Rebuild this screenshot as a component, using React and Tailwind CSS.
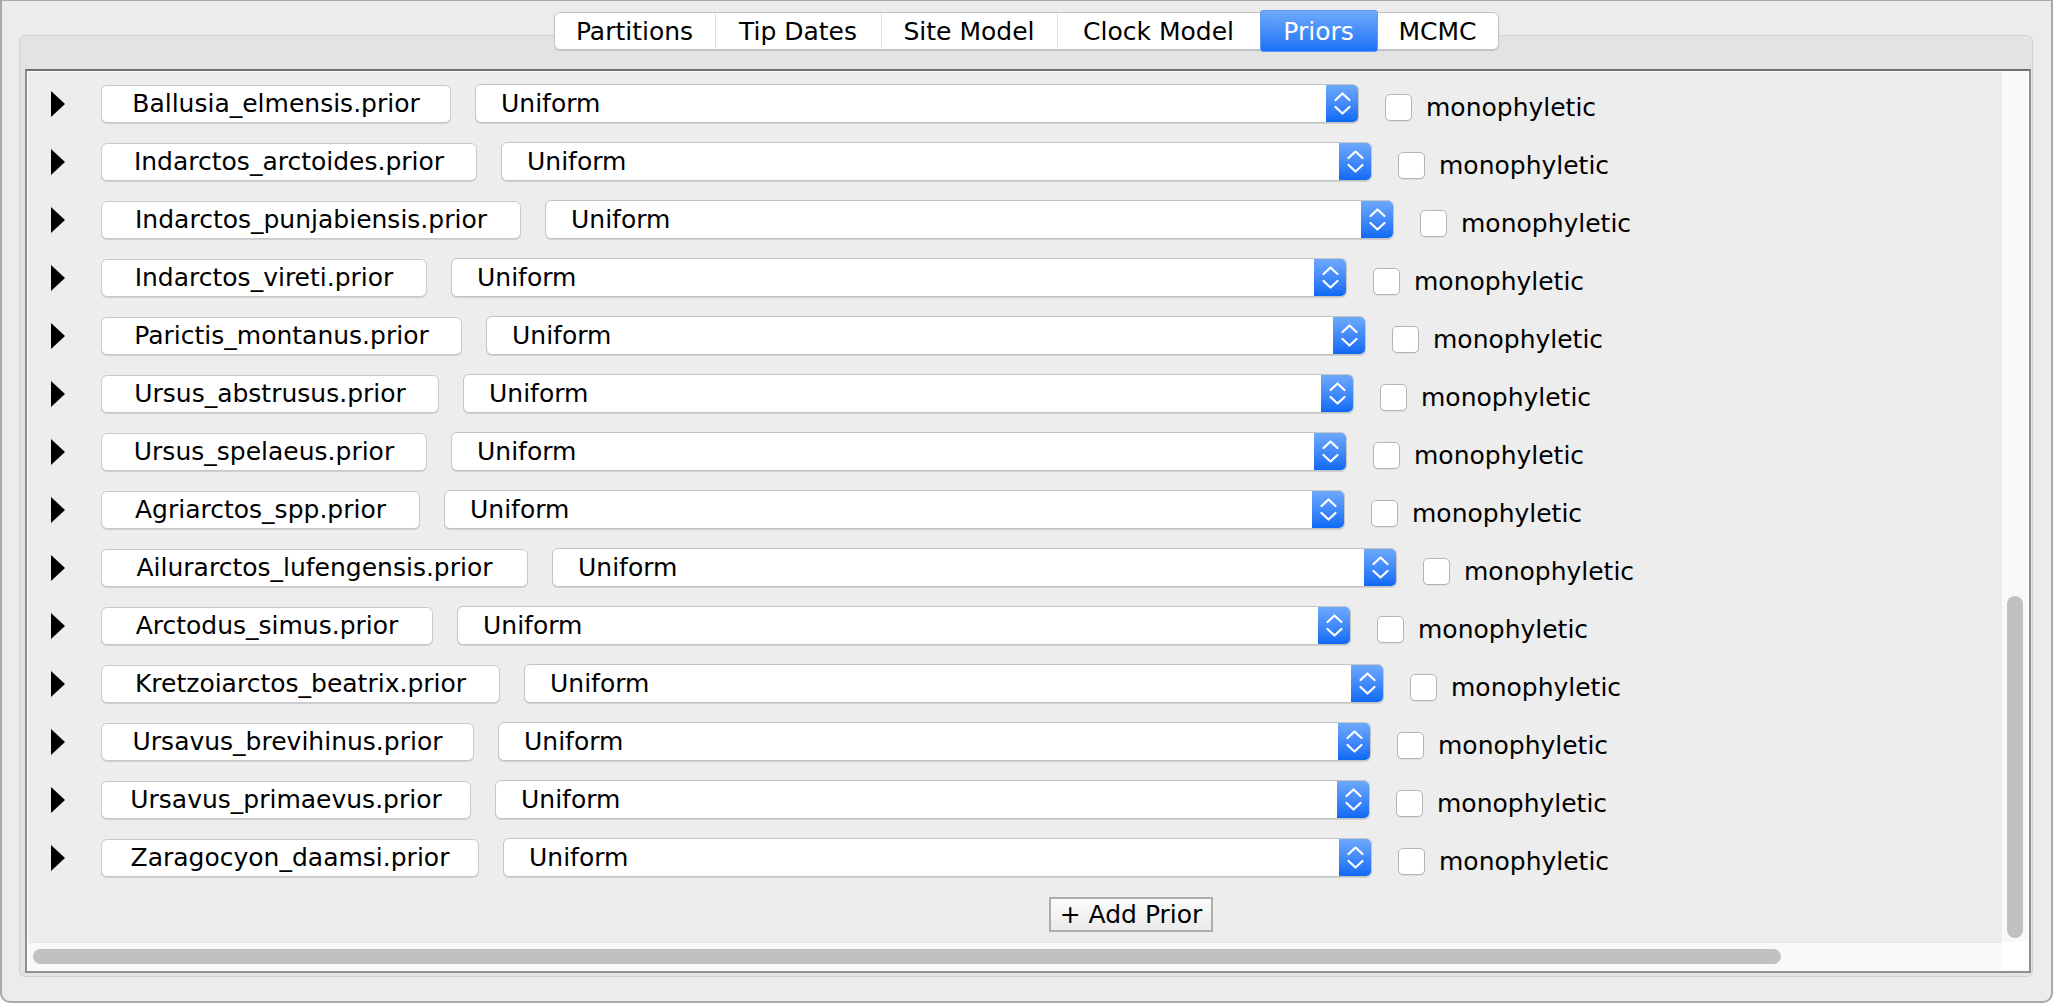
import React from 'react'

// ─── Datos ────────────────────────────────────────────────────────────────────
const TABS = [
  {label: 'Partitions', w: 'w-[160px]'},
  {label: 'Tip Dates', w: 'w-[166px]'},
  {label: 'Site Model', w: 'w-[176px]'},
  {label: 'Clock Model', w: 'w-[203px]'},
  {label: 'Priors', w: 'w-[118px]', active: true},
  {label: 'MCMC', w: 'w-[120px]'},
]

const PRIORS = [
  {name: 'Ballusia_elmensis.prior', nw: 'w-[350px]', dw: 'w-[884px]'},
  {name: 'Indarctos_arctoides.prior', nw: 'w-[376px]', dw: 'w-[871px]'},
  {name: 'Indarctos_punjabiensis.prior', nw: 'w-[420px]', dw: 'w-[849px]'},
  {name: 'Indarctos_vireti.prior', nw: 'w-[326px]', dw: 'w-[896px]'},
  {name: 'Parictis_montanus.prior', nw: 'w-[361px]', dw: 'w-[880px]'},
  {name: 'Ursus_abstrusus.prior', nw: 'w-[338px]', dw: 'w-[891px]'},
  {name: 'Ursus_spelaeus.prior', nw: 'w-[326px]', dw: 'w-[896px]'},
  {name: 'Agriarctos_spp.prior', nw: 'w-[319px]', dw: 'w-[901px]'},
  {name: 'Ailurarctos_lufengensis.prior', nw: 'w-[427px]', dw: 'w-[845px]'},
  {name: 'Arctodus_simus.prior', nw: 'w-[332px]', dw: 'w-[894px]'},
  {name: 'Kretzoiarctos_beatrix.prior', nw: 'w-[399px]', dw: 'w-[860px]'},
  {name: 'Ursavus_brevihinus.prior', nw: 'w-[373px]', dw: 'w-[873px]'},
  {name: 'Ursavus_primaevus.prior', nw: 'w-[370px]', dw: 'w-[875px]'},
  {name: 'Zaragocyon_daamsi.prior', nw: 'w-[378px]', dw: 'w-[869px]'},
]

// ─── Piezas ───────────────────────────────────────────────────────────────────
const Disclosure = () => (
  <svg width="14" height="26" viewBox="0 0 14 26" className="shrink-0">
    <polygon points="0,0 14,13 0,26" fill="#000" />
  </svg>
)

const Chevrons = () => (
  <svg width="32" height="39" viewBox="0 0 32 39">
    <polyline points="9.5,16 16.5,9.5 23.5,16" fill="none" stroke="#fff" strokeWidth="2.2" strokeLinecap="round" strokeLinejoin="round" />
    <polyline points="9.5,23 16.5,29.5 23.5,23" fill="none" stroke="#fff" strokeWidth="2.2" strokeLinecap="round" strokeLinejoin="round" />
  </svg>
)

const PriorRow = ({name, nw, dw}) => (
  <div className="flex items-center h-[39px]">
    <div className="ml-[23px]">
      <Disclosure />
    </div>
    <div
      className={`${nw} ml-[36px] h-[38px] shrink-0 flex items-center justify-center bg-white border border-[#c9c9c9] rounded-[6px] shadow-[0_1px_0_rgba(0,0,0,0.12)] text-black`}
    >
      {name}
    </div>
    <div
      className={`${dw} ml-[24px] h-[39px] shrink-0 flex items-center bg-white border border-[#c4c4c4] rounded-[6px] shadow-[0_1px_0_rgba(0,0,0,0.12)] overflow-hidden`}
    >
      <span className="flex-1 pl-[25px] text-black">Uniform</span>
      <div className="w-[32px] h-full bg-gradient-to-b from-[#6da9fc] to-[#0b69f5] flex items-center justify-center">
        <Chevrons />
      </div>
    </div>
    <div className="ml-[26px] mt-[7px] w-[27px] h-[27px] shrink-0 bg-white border border-[#b4b4b4] rounded-[5px] shadow-[0_1px_0_rgba(0,0,0,0.06)]" />
    <span className="ml-[14px] mt-[8px] text-black whitespace-nowrap">monophyletic</span>
  </div>
)

// ─── Pantalla principal ───────────────────────────────────────────────────────
export default function App() {
  return (
    <div className="w-[2053px] h-[1003px] bg-[#ececec] border-x-2 border-b-2 border-t border-[#a9a9a9] rounded-b-[10px] pt-[11px] pl-[17px] pr-[18px] pb-[24px] flex flex-col overflow-hidden font-['DejaVu_Sans',sans-serif] text-[25px] leading-none">
      {/* Pestañas */}
      <div className="flex justify-center relative z-10">
        <div className="flex h-[38px] bg-white border border-[#c3c3c3] rounded-[6px] shadow-[0_1px_1px_rgba(0,0,0,0.15)]">
          {TABS.map((t, i) =>
            t.active ? (
              <div
                key={t.label}
                className={`${t.w} -my-[3px] flex items-center justify-center bg-gradient-to-b from-[#6ea9fb] to-[#1670f6] border border-[#5b9af5] rounded-[3px] text-white`}
              >
                {t.label}
              </div>
            ) : (
              <div
                key={t.label}
                className={`${t.w} flex items-center justify-center text-black ${i > 0 && !TABS[i - 1].active ? 'border-l border-[#dedede]' : ''}`}
              >
                {t.label}
              </div>
            )
          )}
        </div>
      </div>

      {/* Panel de la pestaña */}
      <div className="-mt-[15px] flex-1 min-h-0 bg-[#e3e3e3] border border-[#d2d2d2] rounded-[6px] pt-[33px] pl-[5px] pr-[1px] pb-[3px] flex flex-col">
        <div className="flex-1 min-h-0 border-2 border-[#909090] border-t-[#6e6e6e] flex flex-col">
          <div className="flex-1 min-h-0 border border-[#fbfbfb] flex flex-col">
            <div className="flex-1 min-h-0 flex">
              {/* Vista */}
              <div className="flex-1 min-w-0 bg-[#ededed] overflow-hidden">
                <div className="w-[2206px] pt-[12px] flex flex-col">
                  <div className="flex flex-col gap-[19px]">
                    {PRIORS.map((p) => (
                      <PriorRow key={p.name} {...p} />
                    ))}
                  </div>
                  <div className="flex justify-center mt-[20px]">
                    <button className="w-[164px] h-[35px] flex items-center justify-center border-2 border-[#adadad] bg-gradient-to-b from-[#fbfbfb] to-[#ebebeb] text-black">
                      + Add Prior
                    </button>
                  </div>
                </div>
              </div>
              {/* Barra vertical */}
              <div className="w-[27px] bg-[#f9f9f9] border-l border-[#ebebeb] flex flex-col justify-end items-center pb-[4px]">
                <div className="w-[16px] h-[342px] rounded-full bg-[#c1c1c1]" />
              </div>
            </div>
            {/* Barra horizontal */}
            <div className="h-[28px] flex">
              <div className="flex-1 bg-[#f9f9f9] border-t border-[#e6e6e6] flex items-center pl-[5px]">
                <div className="w-[1748px] h-[15px] rounded-full bg-[#c1c1c1]" />
              </div>
              <div className="w-[27px] bg-white" />
            </div>
          </div>
        </div>
      </div>
    </div>
  )
}
